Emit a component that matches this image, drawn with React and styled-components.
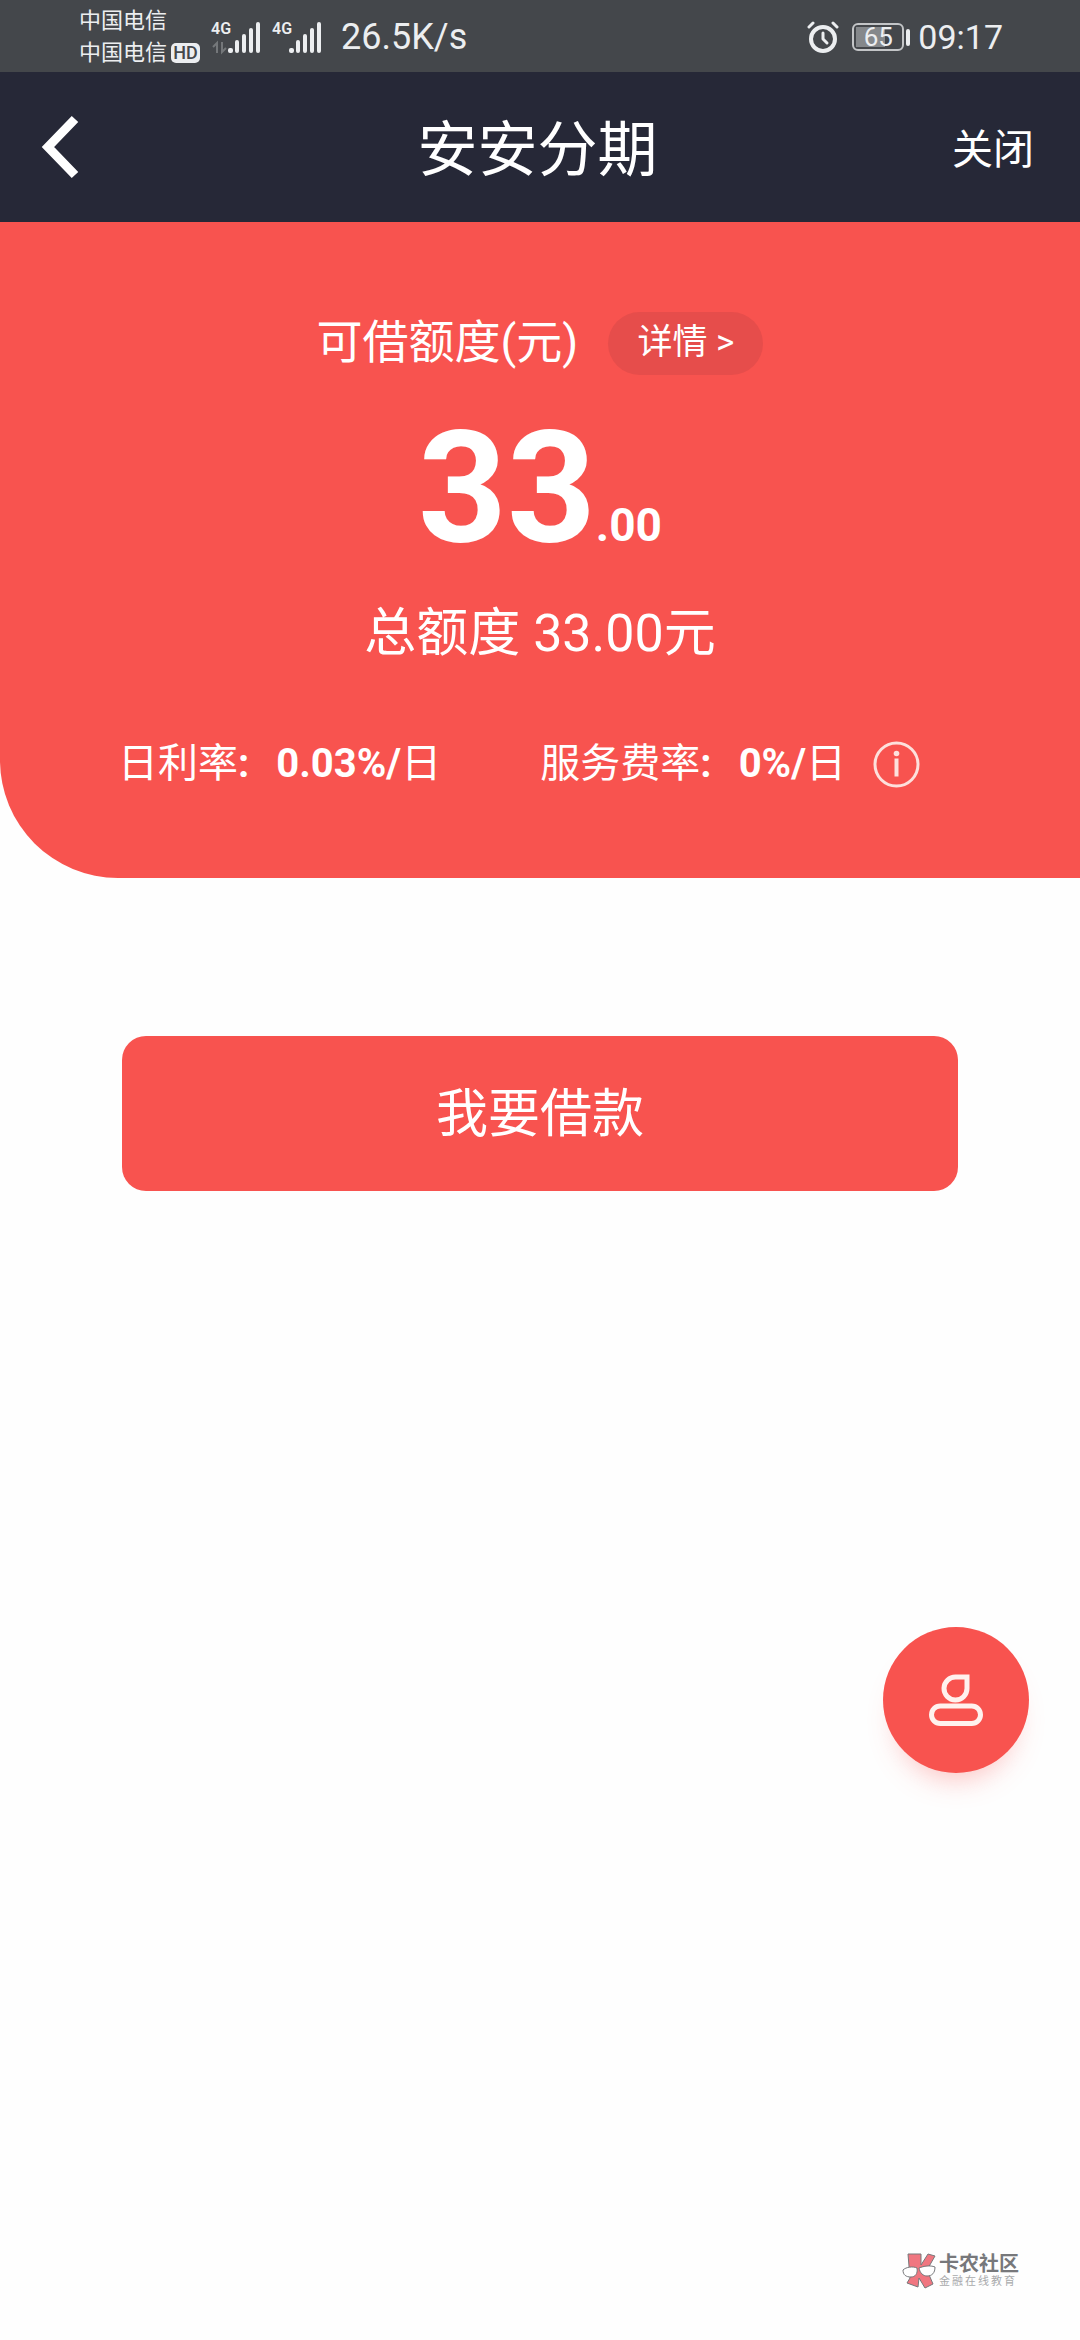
import React from "react";
import styled, { createGlobalStyle } from "styled-components";

const GlobalStyle = createGlobalStyle`
  * {
    box-sizing: border-box;
  }
  body {
    margin: 0;
    background-color: #fefefe;
    font-family: Roboto, "Noto Sans CJK SC", sans-serif;
  }
  button {
    border: none;
    padding: 0;
    background: none;
    color: inherit;
    font-family: inherit;
    cursor: pointer;
  }
  h1, p, dl, dd {
    margin: 0;
  }
  svg {
    display: block;
  }
`;

const Page = styled.div`
  min-height: 100vh;
  display: flex;
  flex-direction: column;
`;

/* status bar */
const StatusBar = styled.div`
  height: 72px;
  padding: 2px 77px 0 79px;
  display: flex;
  align-items: center;
  justify-content: space-between;
  background-color: #44474b;
  color: #eceef0;
`;
const StatusGroup = styled.div`
  display: flex;
  align-items: center;
  gap: ${({ $gap }) => $gap}px;
`;
const Carriers = styled.div`
  font-size: 22px;
  line-height: 32px;
`;
const Carrier = styled.div`
  display: flex;
  align-items: center;
  gap: 4px;
`;
const HdBadge = styled.span`
  width: 29px;
  height: 20px;
  border-radius: 5px;
  background-color: #eceef0;
  color: #44474b;
  font-size: 18px;
  font-weight: 500;
  line-height: 20px;
  text-align: center;
`;
const Signal = styled.div`
  display: flex;
`;
const Network = styled.div`
  width: 17px;
  font-size: 16px;
  font-weight: 600;
  line-height: 14px;
`;
const Speed = styled.span`
  font-size: 36px;
  margin-left: 8px;
`;
const Clock = styled.span`
  font-size: 34px;
`;
const Battery = styled.div`
  display: flex;
  align-items: center;
  gap: 2px;

  &::after {
    content: "";
    width: 4px;
    height: 17px;
    border-radius: 2px;
    background-color: #eceef0;
  }
`;
const BatteryLevel = styled.div`
  width: 52px;
  height: 28px;
  border: 2px solid #c3c5c7;
  border-radius: 6px;
  background: linear-gradient(90deg, #85888b 65%, transparent 65%) 2px 2px / 44px 20px no-repeat;
  font-size: 26px;
  line-height: 24px;
  text-align: center;
`;

/* title bar */
const TitleBar = styled.header`
  height: 150px;
  padding: 0 46px 0 41px;
  display: grid;
  grid-template-columns: 1fr auto 1fr;
  align-items: center;
  background-color: #262837;
  color: white;
`;
const Title = styled.h1`
  padding-top: 8px;
  font-size: 60px;
  font-weight: 400;
  line-height: 80px;
`;
const BackButton = styled.button`
  justify-self: start;
`;
const CloseButton = styled.button`
  justify-self: end;
  padding-top: 6px;
  font-size: 41px;
  line-height: 60px;
`;

/* quota */
const Quota = styled.section`
  padding: 86px 118px 84px;
  border-bottom-left-radius: 118px;
  background-color: #f8534f;
  color: white;
`;
const QuotaHead = styled.div`
  display: flex;
  justify-content: center;
  align-items: center;
  gap: 30px;
  font-size: 46px;
  line-height: 68px;

  span {
    padding-bottom: 2px;
  }
`;
const DetailButton = styled.button`
  height: 63px;
  padding: 0 29px;
  border-radius: 32px;
  background-color: #e64d4b;
  font-size: 35px;
  line-height: 60px;
`;
const Amount = styled.p`
  margin-top: 20px;
  font-size: 155px;
  font-weight: 700;
  line-height: 180px;
  text-align: center;

  small {
    font-size: 46px;
    line-height: 46px;
  }
`;
const Total = styled.p`
  margin-top: 18px;
  font-size: 52px;
  line-height: 76px;
  text-align: center;
`;
const Rates = styled.dl`
  margin-top: 62px;
  display: flex;
  justify-content: space-between;
  font-size: 40px;
  line-height: 60px;
`;
const Rate = styled.div`
  display: flex;
  align-items: center;
  gap: 27px;

  b {
    font-weight: 700;
  }
`;
const InfoButton = styled.button`
  margin-right: 42px;
`;

/* actions */
const Actions = styled.main`
  padding: 158px 122px;
`;
const BorrowButton = styled.button`
  width: 100%;
  height: 155px;
  padding-bottom: 8px;
  border-radius: 24px;
  background-color: #f8534f;
  color: white;
  font-size: 52px;
`;
const ServiceButton = styled.button`
  position: fixed;
  right: 51px;
  bottom: 567px;
  width: 146px;
  height: 146px;
  border-radius: 50%;
  display: grid;
  place-items: center;
  background-color: #f8534f;
  box-shadow: 0 20px 28px -14px rgba(248, 83, 79, 0.35);
`;

/* community mark */
const Mark = styled.footer`
  margin-top: auto;
  padding: 0 61px 51px 0;
  display: flex;
  justify-content: flex-end;
  align-items: center;
  gap: 3px;
`;
const MarkName = styled.div`
  color: #77787b;
  font-size: 20px;
  font-weight: 700;
  line-height: 21px;
`;
const MarkSlogan = styled.div`
  color: #a9aaac;
  font-size: 11px;
  line-height: 14px;
  letter-spacing: 2px;
`;

const SignalBars = ({ arrows }) => (
  <Signal>
    <Network>4G</Network>
    <svg width="33" height="31" viewBox="0 0 33 31" fill="#eceef0" overflow="visible">
      {arrows && (
        <g stroke="#74777a" strokeWidth="2" fill="none">
          <path d="M-11 31V21l-4 4M-6 20v10l4-4" />
        </g>
      )}
      <rect x="0" y="26" width="5" height="5" rx="2" />
      <rect x="7" y="18" width="4" height="13" rx="2" />
      <rect x="14" y="12" width="4" height="19" rx="2" />
      <rect x="21" y="6" width="4" height="25" rx="2" />
      <rect x="28" y="0" width="4" height="31" rx="2" />
    </svg>
  </Signal>
);

const AlarmIcon = () => (
  <svg width="32" height="32" viewBox="0 0 32 32" fill="none" stroke="#eceef0" strokeLinecap="round">
    <circle cx="16" cy="18" r="12" strokeWidth="4" />
    <path d="M16 12v6l4 4" strokeWidth="3" strokeLinejoin="round" />
    <path d="M2 6l4-4M30 6l-4-4" strokeWidth="3" />
  </svg>
);

const BackIcon = () => (
  <svg width="38" height="64" viewBox="0 0 38 64" fill="none" stroke="white" strokeWidth="9">
    <path d="M34 4L7 32l27 28" />
  </svg>
);

const InfoIcon = () => (
  <svg width="47" height="47" viewBox="0 0 47 47" fill="none" stroke="#fde0dc">
    <circle cx="23.5" cy="23.5" r="21.5" strokeWidth="3" />
    <path d="M23.5 17.5v18" strokeWidth="4" />
    <circle cx="23.5" cy="12.5" r="2.8" fill="#fde0dc" stroke="none" />
  </svg>
);

const PersonIcon = () => (
  <svg width="54" height="54" viewBox="0 0 54 54" fill="none" stroke="#fff1ee" strokeWidth="5">
    <path d="M38 4H27a11.500 11.500 0 1 0 11 11.500z" />
    <rect x="2.500" y="33" width="49" height="17.500" rx="8.750" />
  </svg>
);

const MarkLogo = () => (
  <svg width="34" height="36" viewBox="0 0 34 36" stroke="#77787b">
    <path d="M6 1h13v11l7-11 7 2-8 14 6 14-8 4-6-10-1 9-11-4 3-5z" fill="#f07680" />
    <path d="M1 17c3-3 10-4 14-2 1 6-2 9-6 9-5 0-8-2-8-7zM17 15c5-2 11-3 16-1 0 6-3 9-8 9-4 0-7-3-8-8z" fill="white" />
  </svg>
);

const App = () => {
  return (
    <Page>
      <GlobalStyle />
      <StatusBar>
        <StatusGroup $gap={11}>
          <Carriers>
            <Carrier>中国电信</Carrier>
            <Carrier>
              中国电信<HdBadge>HD</HdBadge>
            </Carrier>
          </Carriers>
          <SignalBars arrows />
          <SignalBars />
          <Speed>26.5K/s</Speed>
        </StatusGroup>
        <StatusGroup $gap={8}>
          <StatusGroup $gap={13}>
            <AlarmIcon />
            <Battery>
              <BatteryLevel>65</BatteryLevel>
            </Battery>
          </StatusGroup>
          <Clock>09:17</Clock>
        </StatusGroup>
      </StatusBar>

      <TitleBar>
        <BackButton aria-label="返回">
          <BackIcon />
        </BackButton>
        <Title>安安分期</Title>
        <CloseButton>关闭</CloseButton>
      </TitleBar>

      {/* available quota */}
      <Quota>
        <QuotaHead>
          <span>可借额度(元)</span>
          <DetailButton>详情 &gt;</DetailButton>
        </QuotaHead>
        <Amount>
          33<small>.00</small>
        </Amount>
        <Total>总额度 33.00元</Total>
        <Rates>
          <Rate>
            <dt>
              日利率<b>:</b>
            </dt>
            <dd>
              <b>0.03%/</b>日
            </dd>
          </Rate>
          <Rate>
            <dt>
              服务费率<b>:</b>
            </dt>
            <dd>
              <b>0%/</b>日
            </dd>
            <InfoButton aria-label="费率说明">
              <InfoIcon />
            </InfoButton>
          </Rate>
        </Rates>
      </Quota>

      <Actions>
        <BorrowButton>我要借款</BorrowButton>
      </Actions>

      <ServiceButton aria-label="客服">
        <PersonIcon />
      </ServiceButton>

      <Mark>
        <MarkLogo />
        <div>
          <MarkName>卡农社区</MarkName>
          <MarkSlogan>金融在线教育</MarkSlogan>
        </div>
      </Mark>
    </Page>
  );
};

export default App;
